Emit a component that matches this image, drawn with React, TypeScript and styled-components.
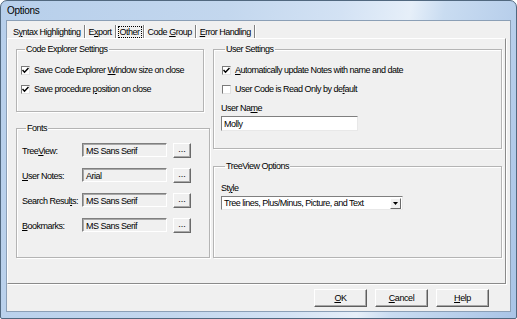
import React from "react";
import styled, { createGlobalStyle } from "styled-components";

const FONT = `"Liberation Sans", Arial, sans-serif`;

const GlobalStyle = createGlobalStyle`
  html, body { margin: 0; padding: 0; background: #ffffff; }
  body { font-family: ${FONT}; }
  * { box-sizing: border-box; }
`;

const Window = styled.div`
  width: 517px;
  height: 319px;
  display: flex;
  flex-direction: column;
  border: 1px solid #51687f;
  border-radius: 7px 7px 2px 2px;
  background: linear-gradient(
    100deg,
    #b7cfeb 0%,
    #c3d7ee 40%,
    #d3e2f4 60%,
    #e6eff9 72%,
    #c9dcf1 78%,
    #b8cfeb 90%,
    #a9c4e6 100%
  );
  font-family: ${FONT};
  color: #000;
  overflow: hidden;
`;

const TitleBar = styled.div`
  height: 19px;
  display: flex;
  align-items: center;
  padding-left: 6px;
  font-size: 10px;
  letter-spacing: -0.3px;
  color: #000;
`;

const Client = styled.div`
  flex: 1;
  margin: 0 5px 6px 5px;
  border: 1px solid #8b9fb6;
  background: #f0f0f0;
  display: flex;
  flex-direction: column;
  font-size: 9px;
  letter-spacing: -0.5px;
  line-height: 10px;
`;

const TabBar = styled.div`
  height: 17px;
  display: flex;
  align-items: flex-start;
  padding: 5px 0 0 4px;
`;

const Tab = styled.div<{ $active?: boolean }>`
  height: 12px;
  padding: 0 1px;
  border: 1px dotted ${(p) => (p.$active ? "#000" : "transparent")};
  line-height: 10px;
  white-space: nowrap;
`;

const TabSep = styled.span`
  width: 2px;
  height: 13px;
  margin: -1px 1px 0 1px;
  border-left: 1px solid #808080;
  border-right: 1px solid #ffffff;
`;

const Key = styled.span`
  text-decoration: underline;
  text-underline-offset: 1px;
`;

const Panel = styled.div`
  height: 246px;
  margin-right: 4px;
  border-top: 1px solid #ffffff;
  border-left: 1px solid #ffffff;
  border-right: 1px solid #8a8a8a;
  border-bottom: 1px solid #8a8a8a;
  box-shadow: 1px 1px 0 #ffffff;
  display: grid;
  grid-template-columns: 194px 289px;
  column-gap: 3px;
  padding: 5px 3px 0 8px;
`;

const Column = styled.div<{ $gap: number }>`
  display: flex;
  flex-direction: column;
  gap: ${(p) => p.$gap}px;
`;

const Group = styled.fieldset<{ $w: number; $h: number; $pl: number; $pt: number; $gap: number }>`
  margin: 0;
  min-width: 0;
  width: ${(p) => p.$w}px;
  height: ${(p) => p.$h}px;
  border: 1px solid #b4b4b4;
  box-shadow: inset 1px 1px 0 #ffffff, 1px 1px 0 #ffffff;
  padding: ${(p) => p.$pt}px 4px 0 ${(p) => p.$pl}px;
  display: flex;
  flex-direction: column;
  gap: ${(p) => p.$gap}px;
`;

const Legend = styled.legend`
  margin-left: 4px;
  padding: 0 1px;
  line-height: 11px;
  height: 11px;
`;

const CheckRow = styled.label<{ $indent?: number }>`
  display: flex;
  align-items: center;
  gap: 4px;
  height: 12px;
  margin-left: ${(p) => p.$indent ?? 0}px;
  white-space: nowrap;
`;

const CheckBox = styled.span`
  width: 9px;
  height: 9px;
  flex: none;
  background: #ffffff;
  border: 1px solid;
  border-color: #7a7a7a #e2e2e2 #e2e2e2 #7a7a7a;
  display: flex;
  align-items: center;
  justify-content: center;
`;

const FontRow = styled.div`
  display: flex;
  align-items: center;
  height: 15px;
`;

const FontLabel = styled.span`
  width: 60px;
  white-space: nowrap;
`;

const FontField = styled.div`
  width: 85px;
  height: 14px;
  border-top: 1px solid #7f7f7f;
  border-left: 1px solid #7f7f7f;
  border-right: 1px solid #ffffff;
  border-bottom: 1px solid #ffffff;
  box-shadow: inset 1px 1px 0 #a8a8a8;
  background: #f0f0f0;
  padding: 2px 0 0 3px;
  white-space: nowrap;
  margin-top: -1px;
`;

const DotsButton = styled.button`
  width: 18px;
  height: 15px;
  margin-left: 6px;
  padding: 0 0 3px 0;
  font-family: ${FONT};
  font-size: 9px;
  letter-spacing: 0;
  line-height: 10px;
  color: #000;
  background: #f0f0f0;
  border: 1px solid;
  border-color: #ffffff #6a6a6a #6a6a6a #ffffff;
  box-shadow: inset -1px -1px 0 #a8a8a8;
  display: flex;
  align-items: flex-end;
  justify-content: center;
`;

const FieldLabel = styled.div`
  height: 12px;
  line-height: 12px;
  white-space: nowrap;
`;

const Stack = styled.div<{ $gap: number }>`
  display: flex;
  flex-direction: column;
  gap: ${(p) => p.$gap}px;
`;

const TextInput = styled.div`
  width: 137px;
  height: 15px;
  background: #ffffff;
  border-top: 1px solid #7f7f7f;
  border-left: 1px solid #7f7f7f;
  border-right: 1px solid #e8e8e8;
  border-bottom: 1px solid #e8e8e8;
  padding: 2px 0 0 2px;
`;

const Select = styled.div`
  width: 182px;
  height: 14px;
  background: #ffffff;
  border-top: 1px solid #7f7f7f;
  border-left: 1px solid #7f7f7f;
  border-right: 1px solid #e8e8e8;
  border-bottom: 1px solid #e8e8e8;
  display: flex;
  align-items: center;
  padding: 0 1px 0 2px;
  white-space: nowrap;
`;

const SelectText = styled.span`
  flex: 1;
`;

const DropButton = styled.span`
  width: 11px;
  height: 11px;
  background: #f0f0f0;
  border: 1px solid;
  border-color: #ffffff #6a6a6a #6a6a6a #ffffff;
  display: flex;
  align-items: center;
  justify-content: center;
`;

const ButtonRow = styled.div`
  display: flex;
  justify-content: flex-end;
  gap: 8px;
  padding: 5px 21px 0 0;
`;

const Button = styled.button`
  width: 53px;
  height: 18px;
  font-family: ${FONT};
  font-size: 9px;
  letter-spacing: -0.4px;
  color: #000;
  background: #f0f0f0;
  border: 1px solid;
  border-color: #ffffff #5e5e5e #5e5e5e #ffffff;
  box-shadow: inset -1px -1px 0 #a8a8a8;
  padding: 0;
`;

const Check = () => (
  <svg width="7" height="7" viewBox="0 0 7 7">
    <polyline points="0.5,3 2.5,5.2 6.5,1" fill="none" stroke="#000" strokeWidth="1.5" />
  </svg>
);

const Arrow = () => (
  <svg width="5" height="3" viewBox="0 0 5 3">
    <polygon points="0,0 5,0 2.5,3" fill="#000" />
  </svg>
);

const fonts = [
  { pre: "Tree", key: "V", post: "iew:", value: "MS Sans Serif" },
  { pre: "", key: "U", post: "ser Notes:", value: "Arial" },
  { pre: "Search Resul", key: "t", post: "s:", value: "MS Sans Serif" },
  { pre: "", key: "B", post: "ookmarks:", value: "MS Sans Serif" },
];

export default function App() {
  return (
    <>
      <GlobalStyle />
      <Window>
        <TitleBar>Options</TitleBar>
        <Client>
          <TabBar>
            <Tab>S<Key>y</Key>ntax Highlighting</Tab>
            <TabSep />
            <Tab>E<Key>x</Key>port</Tab>
            <TabSep />
            <Tab $active>Other</Tab>
            <TabSep />
            <Tab>Code <Key>G</Key>roup</Tab>
            <TabSep />
            <Tab><Key>E</Key>rror Handling</Tab>
            <TabSep />
          </TabBar>
          <Panel>
            <Column $gap={11}>
              <Group $w={188} $h={68} $pl={4} $pt={9} $gap={7}>
                <Legend>Code Explorer Settings</Legend>
                <CheckRow>
                  <CheckBox><Check /></CheckBox>
                  <span>Save Code Explorer <Key>W</Key>indow size on close</span>
                </CheckRow>
                <CheckRow>
                  <CheckBox><Check /></CheckBox>
                  <span>Save procedure <Key>p</Key>osition on close</span>
                </CheckRow>
              </Group>
              <Group $w={194} $h={135} $pl={5} $pt={9} $gap={10}>
                <Legend>Fonts</Legend>
                {fonts.map((f) => (
                  <FontRow key={f.pre + f.post}>
                    <FontLabel>
                      {f.pre}
                      <Key>{f.key}</Key>
                      {f.post}
                    </FontLabel>
                    <FontField>{f.value}</FontField>
                    <DotsButton>...</DotsButton>
                  </FontRow>
                ))}
              </Group>
            </Column>
            <Column $gap={12}>
              <Group $w={289} $h={105} $pl={7} $pt={9} $gap={7}>
                <Legend>User Settings</Legend>
                <CheckRow $indent={1}>
                  <CheckBox><Check /></CheckBox>
                  <span><Key>A</Key>utomatically update Notes with name and date</span>
                </CheckRow>
                <CheckRow $indent={1}>
                  <CheckBox />
                  <span>User Code is Read Only by de<Key>f</Key>ault</span>
                </CheckRow>
                <Stack $gap={2}>
                  <FieldLabel>User Na<Key>m</Key>e</FieldLabel>
                  <TextInput>Molly</TextInput>
                </Stack>
              </Group>
              <Group $w={289} $h={97} $pl={7} $pt={10} $gap={0}>
                <Legend>TreeView Options</Legend>
                <Stack $gap={2}>
                  <FieldLabel>St<Key>y</Key>le</FieldLabel>
                  <Select>
                    <SelectText>Tree lines, Plus/Minus, Picture, and Text</SelectText>
                    <DropButton><Arrow /></DropButton>
                  </Select>
                </Stack>
              </Group>
            </Column>
          </Panel>
          <ButtonRow>
            <Button><Key>O</Key>K</Button>
            <Button><Key>C</Key>ancel</Button>
            <Button><Key>H</Key>elp</Button>
          </ButtonRow>
        </Client>
      </Window>
    </>
  );
}
